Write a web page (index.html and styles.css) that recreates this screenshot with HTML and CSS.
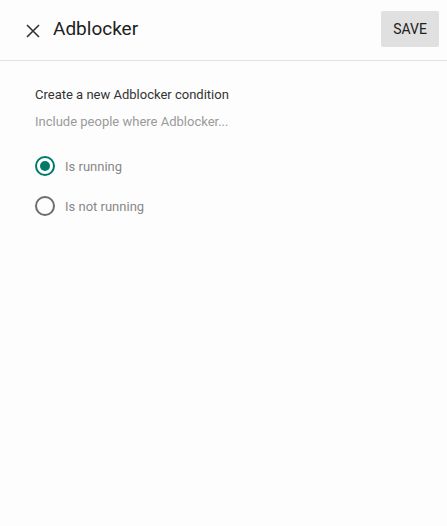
FILE: index.html
```html
<!DOCTYPE html>
<html>
<head>
<meta charset="utf-8">
<link rel="stylesheet" href="styles.css">
</head>
<body>
<div class="dialog">
  <header class="header">
    <button class="close" aria-label="Close">
      <svg width="14" height="14" viewBox="0 0 14 14"><path d="M1 1L13 13M13 1L1 13" stroke="#333" stroke-width="1.6" fill="none"/></svg>
    </button>
    <h1 class="title">Adblocker</h1>
    <button class="save">SAVE</button>
  </header>
  <main class="content">
    <p class="lead">Create a new Adblocker condition</p>
    <p class="hint">Include people where Adblocker...</p>
    <div class="options">
      <label class="option">
        <span class="radio checked"><span class="dot"></span></span>
        <span class="opt-label">Is running</span>
      </label>
      <label class="option">
        <span class="radio"></span>
        <span class="opt-label">Is not running</span>
      </label>
    </div>
  </main>
</div>
</body>
</html>
```
FILE: styles.css
```css
html, body { margin: 0; padding: 0; }
body {
  background: #fdfdfd;
  font-family: Roboto, "Liberation Sans", sans-serif;
  width: 447px;
  height: 526px;
}
.dialog { display: flex; flex-direction: column; }
.header {
  height: 61px;
  box-sizing: border-box;
  border-bottom: 1px solid #e0e0e0;
  display: flex;
  align-items: center;
  padding: 0 8px 0 26px;
}
.close {
  border: 0;
  background: none;
  padding: 0;
  width: 14px;
  height: 14px;
  display: flex;
  margin-top: 2px;
}
.title {
  margin: 0 0 0 13px;
  font-size: 19px;
  font-weight: 400;
  color: #212121;
  flex: 1;
  margin-top: -3px;
}
.save {
  border: 0;
  background: #e0e0e0;
  border-radius: 2px;
  width: 58px;
  height: 36px;
  font-family: Roboto, "Liberation Sans", sans-serif;
  font-size: 14px;
  color: #212121;
  padding: 0;
  margin-top: -2px;
}
.content { padding: 26px 35px; }
.lead { margin: 0; font-size: 13px; color: #333; line-height: 16px; }
.hint { margin: 11px 0 0; font-size: 13px; color: #9a9a9a; line-height: 16px; }
.options { margin-top: 26px; display: flex; flex-direction: column; gap: 20px; }
.option { display: flex; align-items: center; gap: 10px; height: 20px; }
.radio {
  width: 20px; height: 20px; box-sizing: border-box;
  border: 2px solid #6d6d6d; border-radius: 50%;
  display: flex; align-items: center; justify-content: center;
}
.radio.checked { border-color: #00796b; }
.dot { width: 10px; height: 10px; border-radius: 50%; background: #00796b; }
.opt-label { font-size: 13px; color: #888; }
```
